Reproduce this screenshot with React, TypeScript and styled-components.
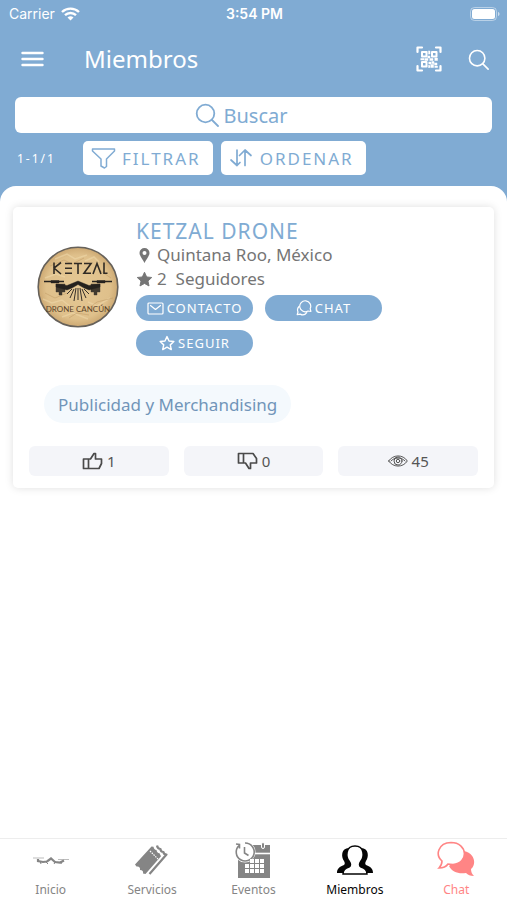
import React from "react";
import styled, { createGlobalStyle } from "styled-components";

const BLUE = "#80abd3";

const GlobalStyle = createGlobalStyle`
  *, *::before, *::after { box-sizing: border-box; }
  body { margin: 0; background: ${BLUE}; font-family: "Noto Sans", "Open Sans", sans-serif; }
  button, input { font: inherit; color: inherit; border: 0; background: none; padding: 0; margin: 0; }
  button { cursor: pointer; }
  svg { display: block; flex: none; }
`;

const Screen = styled.div`
  display: flex;
  flex-direction: column;
  min-height: 100vh;
  background: ${BLUE};
`;

const StatusBar = styled.div`
  display: grid;
  grid-template-columns: 1fr auto 1fr;
  align-items: center;
  height: 28px;
  padding: 0 7px 0 9px;
  color: #fff;
  font: 14px/20px Inter, sans-serif;
`;

const Carrier = styled.span`
  display: flex;
  align-items: center;
  gap: 6px;
`;

const Clock = styled.time`
  font-weight: 600;
`;

const Battery = styled.span`
  display: flex;
  justify-content: flex-end;
`;

const Header = styled.header`
  display: flex;
  align-items: center;
  height: 62px;
  padding: 0 18px 0 20px;
  color: #fff;
`;

const PageTitle = styled.h1`
  flex: 1;
  margin: 0 0 0 38px;
  font-size: 24px;
  line-height: 32px;
  font-weight: 400;
`;

const IconButton = styled.button`
  display: flex;
  & + & { margin-left: 26px; }
`;

const SearchBox = styled.label`
  display: flex;
  align-items: center;
  justify-content: center;
  gap: 4px;
  height: 36px;
  margin: 7px 15px 8px;
  padding-right: 24px;
  border-radius: 6px;
  background: #fff;
  color: ${BLUE};
`;

const SearchInput = styled.input`
  field-sizing: content;
  height: 28px;
  font-size: 20px;
  outline: none;
  &::placeholder { color: ${BLUE}; opacity: 1; }
`;

const Toolbar = styled.div`
  display: flex;
  align-items: center;
  gap: 8px;
  padding: 0 17px;
`;

const Range = styled.span`
  width: 58px;
  color: #fff;
  font-size: 12px;
  letter-spacing: 2px;
`;

const ToolButton = styled.button`
  display: flex;
  align-items: center;
  gap: 6px;
  height: 34px;
  padding: 0 12px 0 8px;
  border-radius: 5px;
  background: #fff;
  color: ${BLUE};
  font-size: 17px;
  letter-spacing: 2px;
`;

const Content = styled.main`
  flex: 1;
  margin-top: 11px;
  padding: 21px 13px;
  border-radius: 16px 16px 0 0;
  background: #fff;
`;

const Card = styled.article`
  padding: 12px 16px;
  border-radius: 5px;
  background: #fff;
  box-shadow: 0 0 9px rgba(0, 0, 0, 0.13);
`;

const Profile = styled.div`
  display: flex;
  gap: 17px;
  padding-left: 8px;
`;

const LogoHolder = styled.div`
  padding-top: 27px;
`;

const Details = styled.div`
  flex: 1;
`;

const Name = styled.h2`
  margin: 0;
  color: ${BLUE};
  font-size: 21px;
  line-height: 24px;
  font-weight: 400;
  letter-spacing: 1px;
`;

const Fact = styled.p`
  display: flex;
  align-items: center;
  gap: 4px;
  margin: 0;
  color: #757575;
  font-size: 17px;
  line-height: 24px;
  white-space: pre;
`;

const Actions = styled.div`
  display: flex;
  flex-wrap: wrap;
  gap: 9px 12px;
  margin-top: 4px;
`;

const Pill = styled.button`
  display: flex;
  align-items: center;
  justify-content: center;
  gap: 3px;
  width: 117px;
  height: 26px;
  border-radius: 13px;
  background: ${BLUE};
  color: #fff;
  font-size: 13px;
  letter-spacing: 1px;
`;

const Tag = styled.a`
  display: inline-flex;
  align-items: center;
  height: 38px;
  margin: 29px 15px 23px;
  padding: 0 14px;
  border-radius: 19px;
  background: #f4f9fd;
  color: #7195b9;
  font-size: 17px;
  text-decoration: none;
`;

const Stats = styled.div`
  display: grid;
  grid-template-columns: repeat(3, 1fr);
  gap: 15px;
`;

const Stat = styled.button`
  display: flex;
  align-items: center;
  justify-content: center;
  gap: 4px;
  height: 30px;
  border-radius: 6px;
  background: #f4f5f9;
  color: #555;
  font-size: 15px;
`;

const TabBar = styled.nav`
  position: sticky;
  bottom: 0;
  display: grid;
  grid-template-columns: repeat(5, 1fr);
  height: 62px;
  border-top: 1px solid #ededed;
  background: #fff;
`;

const Tab = styled.a<{ $color: string }>`
  display: flex;
  flex-direction: column;
  align-items: center;
  gap: 3px;
  padding-top: 2px;
  color: ${(p) => p.$color};
  font-size: 12px;
  line-height: 16px;
  text-decoration: none;
`;

const line = { fill: "none", stroke: "currentColor", strokeLinecap: "round", strokeLinejoin: "round" } as const;

const WifiIcon = () => (
  <svg width="19" height="14" viewBox="0 0 19 14" fill="none" stroke="currentColor" strokeWidth="2.4">
    <path d="M1 5a12.4 12.4 0 0 1 17 0M4 8.2a8 8 0 0 1 11 0" />
    <path d="M9.5 13.5 6.5 10.6a4.4 4.4 0 0 1 6 0z" fill="currentColor" stroke="none" />
  </svg>
);

const BatteryIcon = () => (
  <svg width="30" height="14" viewBox="0 0 30 14">
    <rect x=".5" y=".5" width="26" height="13" rx="4" fill="none" stroke="#fff" opacity=".45" />
    <rect x="2" y="2" width="23" height="10" rx="2.5" fill="#fff" />
    <path d="M28 5c2 .5 2 3.5 0 4z" fill="#fff" opacity=".6" />
  </svg>
);

const MenuIcon = () => (
  <svg width="26" height="18" viewBox="0 0 26 18" {...line} strokeWidth="2.4">
    <path d="M2.500 3h20M2.500 9h20M2.500 15h20" />
  </svg>
);

const QrIcon = () => (
  <svg width="26" height="26" viewBox="0 0 26 26" {...line} strokeWidth="2.2">
    <path d="M1.500 6V1.500H6M20 1.500h4.500V6M1.500 20v4.500H6M20 24.500h4.500V20" />
    <path d="M6 6h4.500v4.500H6zM16 6h4.500v4.500H16zM6 16h4.500v4.500H6z" strokeWidth="2" />
    <path
      d="M12.500 5h1.500v3h-1.500zM12 10h2v2h-2zM5 12.500h3v1.500H5zM9 12.500h3v2H9zM14 12.500h3v2h-3zM19 12h2.500v2.500H19zM13 16h2v2h-2zM16 15.500h2v2h-2zM18.500 17h2.500v2h-2.500zM15 18.500h2.500v3H15zM12.500 19.500h1.500v2h-1.500zM19 20h2.500v1.500H19z"
      fill="currentColor"
      strokeWidth=".5"
    />
  </svg>
);

const SearchIcon = ({ size }: { size: number }) => (
  <svg width={size} height={size} viewBox="0 0 24 24" {...line} strokeWidth="1.8">
    <circle cx="10.500" cy="10.500" r="8.800" />
    <path d="m17 17 6 6" />
  </svg>
);

const FunnelIcon = () => (
  <svg width="25" height="22" viewBox="0 0 25 22" {...line} strokeWidth="1.5">
    <path d="M1.500 2h22v2L15.500 12v7.500L13.500 21l-3.500-2v-7L1.500 4z" />
  </svg>
);

const SortIcon = () => (
  <svg width="25" height="20" viewBox="0 0 25 20" {...line} strokeWidth="1.7">
    <path d="M8 2v15.500M2 12l6 5.500 3-3M16 17.500V2M10.500 7.500 16 2l6 5.500" />
  </svg>
);

const PinIcon = () => (
  <svg width="17" height="15" viewBox="0 0 17 15">
    <path d="M8.500 0a5 5 0 0 0-5 5c0 3.400 4 7 5 10 1-3 5-6.600 5-10a5 5 0 0 0-5-5m0 3a2 2 0 1 1 0 4 2 2 0 0 1 0-4" fill="currentColor" />
  </svg>
);

const StarIcon = ({ filled }: { filled?: boolean }) => (
  <svg width={filled ? 17 : 16} height="16" viewBox="0 0 18 17" fill={filled ? "currentColor" : "none"} stroke="currentColor" strokeWidth={filled ? 1 : 1.6} strokeLinejoin="round">
    <path d="m9 1.300 2.300 5 5.400.6-4 3.700 1.100 5.300L9 13.200l-4.800 2.700 1.100-5.300-4-3.700 5.400-.6z" />
  </svg>
);

const MailIcon = () => (
  <svg width="17" height="13" viewBox="0 0 17 13" {...line} strokeWidth="1.2">
    <rect x="1" y="1" width="15" height="11" rx="1" />
    <path d="m3.500 3.500 5 4 5-4" />
  </svg>
);

const BubblesIcon = () => (
  <svg width="16" height="16" viewBox="0 0 16 16" {...line} strokeWidth="1.2">
    <path d="M14.900 11.500 12 11a5.500 5.500 0 1 1 2.200-2.400z" />
    <path d="M3 6.500a5 5 0 0 0-1 5.500l-.8 2.700 3-.6c2.200 1.200 5 .6 6.500-1.500" />
  </svg>
);

const ThumbIcon = ({ down }: { down?: boolean }) => (
  <svg width="21" height="18" viewBox="0 0 21 18" fill="none" stroke="#4a4a4a" strokeWidth="1.7" strokeLinejoin="round">
    {down ? (
      <path d="M1.500 1.500h5v9.500h-5zM6.500 1.500h9.500l3.500 5v4.500h-6V16.500h-1.500L8.500 11h-2" />
    ) : (
      <path d="M1.500 7h5v9.500h-5zM6.500 7h2L12 1.500h1.500V7h6v4.500l-2.500 5H6.500" />
    )}
  </svg>
);

const EyeIcon = () => (
  <svg width="20" height="12" viewBox="0 0 20 12" {...line} strokeWidth="1">
    <path d="M.7 6C5-.8 15-.8 19.300 6 15 12.800 5 12.800.7 6zM3 6c3-4 11-4 14 0" />
    <circle cx="10" cy="6" r="4" />
    <circle cx="10" cy="6" r="1.700" />
  </svg>
);

const MemberLogo = () => (
  <svg width="82" height="82" viewBox="0 0 82 82" role="img" aria-label="Ketzal Drone Cancún">
    <defs>
      <radialGradient id="parchment">
        <stop offset="0" stopColor="#e5c894" />
        <stop offset=".8" stopColor="#dfc08b" />
        <stop offset="1" stopColor="#cda973" />
      </radialGradient>
    </defs>
    <circle cx="41" cy="41" r="39.800" fill="url(#parchment)" stroke="#66615a" strokeWidth="1.6" />
    <g fill="none" stroke="#f1dbae" strokeWidth="1.5" opacity=".5">
      <path d="m18 13 12-5 8 5 12-4M8 32l11-4 9 3M48 15l9-4 5 5M6 53l9 4 10-3 10 8M51 56l9 4 13-8M25 71l11-4 15 6" />
    </g>
    <g fill="none" stroke="#bb945f" strokeWidth="1" opacity=".45">
      <path d="m13 20 14-6 8 4 12-6M8 47l10 5 12-5M52 62l8-6 16-4M32 72l8-5 12 2M62 24l12 8" />
    </g>
    <g fill="none" stroke="#302b25" strokeWidth="1.6">
      <path d="M17 16.500v11.500M24 16.500l-7 5.500 7 6M28 17.500h7M28 22.300h7M28 27.200h7M37 17.500h8M41 17.500v10.500M47 17.500h7l-7 9.700h7M56 28l4-10.500L64 28M67 16.500v10.700h3.500" />
    </g>
    <g fill="#25221e" stroke="#25221e">
      <path d="M7 35.500h20M55 35.500h20" strokeWidth="1.3" />
      <path d="M14 34.500h8v2.500h-8zM60 34.500h8v2.500h-8z" strokeWidth=".4" />
      <path d="M19 38h9v8h-3v3h-3v-3h-3zM63 38h-9v8h3v3h3v-3h3z" strokeWidth=".4" opacity=".85" />
      <path d="m19 38 11 1.500 11-4.500 11 4.500L63 38v3l-11 3-5-2-6-3.500-6 3.500-5 2-11-3z" strokeWidth=".4" />
    </g>
    <g fill="none" stroke="#37302a">
      <path d="m35 43-5 5M37 43l-4 9M39 42l-2 13M41 42v12M43 42l2 13M45 43l4 9M47 43l5 5" />
    </g>
    <text x="41" y="66" textAnchor="middle" fontFamily="Lato, sans-serif" fontSize="8" fill="#5b4329">DRONE CANCÚN</text>
  </svg>
);

const DroneIcon = () => (
  <svg width="38" height="38" viewBox="0 0 38 38" fill="none" stroke="currentColor">
    <path d="M1 17h11M26 18.500h11" opacity=".55" />
    <path d="M6 18v2l5 1 4-.5 4-3 4 3.500 5 .5 4-2" strokeWidth="2.200" />
    <path d="m8 20 1 3M13 20l3 3M24 20l-2 3M30 20l-1 3" />
  </svg>
);

const TicketIcon = () => (
  <svg width="38" height="38" viewBox="0 0 38 38" fill="currentColor">
    <path d="M2 23.500 18.500 5.500l2 .3c.3 2 1.200 3 3 3.200.2 2 1.200 3 3 3.200l1.500 3L12.500 33l-2.500-.5c.5-2-.5-3.500-3-3.500.5-2.500-1-4-3.500-3.500z" />
    <path d="m17 10 8 8" stroke="#fff" strokeWidth="1.2" strokeDasharray="1.5 1" />
    <path d="m16.500 33 17-19.500c-2.500 0-3-1-3-2.500-2 0-3-1-3-3-2 0-3-1-3.500-3.500" fill="none" stroke="currentColor" strokeWidth="2.2" strokeLinejoin="round" />
  </svg>
);

const CalendarIcon = () => (
  <svg width="38" height="38" viewBox="0 0 38 38">
    <path d="M4 4h32v33H4z" fill="currentColor" />
    <path d="M20 12.500h17" stroke="#fff" strokeWidth="1.600" />
    <rect x="27.500" y="1.500" width="3" height="6" rx="1.500" fill="currentColor" stroke="#fff" />
    <circle cx="11" cy="11" r="10.500" fill="#fff" />
    <path d="M5 4.500A9 9 0 1 0 11 2M2 3l3.500.5v4M10.500 6v6l4 2.500" fill="none" stroke="currentColor" strokeWidth="1.600" />
    <path
      d="M16 18h4v4h-4zM21 18h4v4h-4zM26 18h4v4h-4zM11 23h4v4h-4zM16 23h4v4h-4zM21 23h4v4h-4zM26 23h4v4h-4zM11 28h4v4h-4zM16 28h4v4h-4zM21 28h4v4h-4zM26 28h4v4h-4z"
      fill="#fff"
    />
  </svg>
);

const MembersIcon = () => (
  <svg width="38" height="38" viewBox="0 0 38 38">
    <path d="M1 32c0-4 2-6 7-8 1-1 1-2 0-4-3-4-3-13 5-13 2 0 3 0 6 1 3-1 4-1 6-1 8 0 8 9 5 13-1 2-1 3 0 4 5 2 7 4 7 8z" fill="currentColor" />
    <path d="M7 33c0-4 2-6 6-7 2-1 2-3 0-6-3-4-4-15 6-15s9 11 6 15c-2 3-2 5 0 6 4 1 6 3 6 7z" fill="#fff" stroke="currentColor" strokeWidth="1.500" />
  </svg>
);

const ChatIcon = () => (
  <svg width="38" height="38" viewBox="0 0 38 38">
    <path d="M27 10c12 3 12 14 7 18 0 3 1 5 3 7-4 0-6-1-8-3-8 1-14-1-17-7z" fill="currentColor" />
    <path d="M14 1.500c17 0 18 21 2 22l-5-.5c-2 3-5 4-9 4 2-2 3-4 3-7C-2 14 1 2 14 1.500z" fill="#fff" stroke="currentColor" strokeWidth="1.600" />
  </svg>
);

const tabs = [
  { label: "Inicio", color: "#858585", Icon: DroneIcon },
  { label: "Servicios", color: "#858585", Icon: TicketIcon },
  { label: "Eventos", color: "#858585", Icon: CalendarIcon },
  { label: "Miembros", color: "#050505", Icon: MembersIcon },
  { label: "Chat", color: "#ff8585", Icon: ChatIcon },
];

export default function App() {
  return (
    <Screen>
      <GlobalStyle />
      <StatusBar>
        <Carrier>Carrier <WifiIcon /></Carrier>
        <Clock>3:54 PM</Clock>
        <Battery><BatteryIcon /></Battery>
      </StatusBar>
      <Header>
        <IconButton aria-label="Menú"><MenuIcon /></IconButton>
        <PageTitle>Miembros</PageTitle>
        <IconButton aria-label="Escanear código"><QrIcon /></IconButton>
        <IconButton aria-label="Buscar"><SearchIcon size={21} /></IconButton>
      </Header>
      <SearchBox>
        <SearchIcon size={24} />
        <SearchInput type="text" placeholder="Buscar" aria-label="Buscar" />
      </SearchBox>
      <Toolbar>
        <Range>1-1/1</Range>
        <ToolButton><FunnelIcon />FILTRAR</ToolButton>
        <ToolButton><SortIcon />ORDENAR</ToolButton>
      </Toolbar>
      <Content>
        <Card>
          <Profile>
            <LogoHolder><MemberLogo /></LogoHolder>
            <Details>
              <Name>KETZAL DRONE</Name>
              <Fact><PinIcon />Quintana Roo, México</Fact>
              <Fact><StarIcon filled />{"2  Seguidores"}</Fact>
              <Actions>
                <Pill><MailIcon />CONTACTO</Pill>
                <Pill><BubblesIcon />CHAT</Pill>
                <Pill><StarIcon />SEGUIR</Pill>
              </Actions>
            </Details>
          </Profile>
          <Tag href="#publicidad">Publicidad y Merchandising</Tag>
          <Stats>
            <Stat aria-label="Me gusta: 1"><ThumbIcon />1</Stat>
            <Stat aria-label="No me gusta: 0"><ThumbIcon down />0</Stat>
            <Stat aria-label="Vistas: 45"><EyeIcon />45</Stat>
          </Stats>
        </Card>
      </Content>
      <TabBar>
        {tabs.map(({ label, color, Icon }) => (
          <Tab key={label} href={`#${label.toLowerCase()}`} $color={color}>
            <Icon />
            {label}
          </Tab>
        ))}
      </TabBar>
    </Screen>
  );
}
